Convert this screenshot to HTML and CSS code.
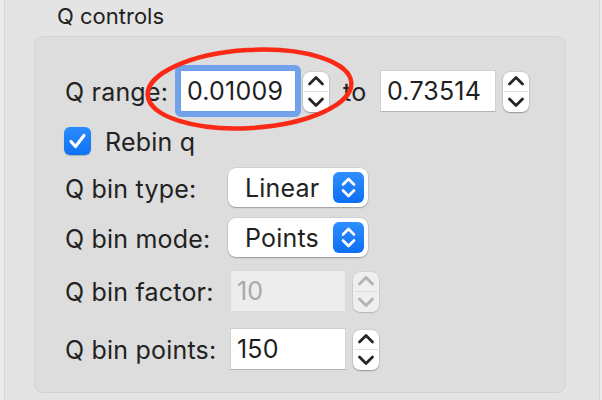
FILE: index.html
```html
<!DOCTYPE html>
<html>
<head>
<meta charset="utf-8">
<link rel="stylesheet" href="styles.css">
</head>
<body>
<div class="window">
  <div class="title">Q controls</div>
  <div class="group">
    <div class="row r-range">
      <span class="label label-range">Q range:</span>
      <div class="field focused"><span class="ring"></span>0.01009</div>
      <div class="stepper">
        <svg width="26" height="40" viewBox="0 0 26 40"><line class="div" x1="1" y1="19.5" x2="25" y2="19.5"/><polyline class="chev" points="6.5,12 13,5.5 19.5,12"/><polyline class="chev" points="6.5,27 13,33.5 19.5,27"/></svg>
      </div>
      <span class="label to">to</span>
      <div class="field">0.73514</div>
      <div class="stepper">
        <svg width="26" height="40" viewBox="0 0 26 40"><line class="div" x1="1" y1="19.5" x2="25" y2="19.5"/><polyline class="chev" points="6.5,12 13,5.5 19.5,12"/><polyline class="chev" points="6.5,27 13,33.5 19.5,27"/></svg>
      </div>
    </div>
    <div class="row r-check">
      <span class="checkbox"><svg width="27" height="28" viewBox="0 0 27 28"><path d="M7 14.5 L11.5 19.5 L20 8.5" fill="none" stroke="#fff" stroke-width="3.2" stroke-linecap="round" stroke-linejoin="round"/></svg></span>
      <span class="label check-label">Rebin q</span>
    </div>
    <div class="row r-type">
      <span class="label label-bin">Q bin type:</span>
      <div class="popup"><span class="popup-text">Linear</span><span class="popbtn"><svg width="31" height="31" viewBox="0 0 31 31"><polyline points="10,12.5 15.5,7 21,12.5"/><polyline points="10,18.5 15.5,24 21,18.5"/></svg></span></div>
    </div>
    <div class="row r-mode">
      <span class="label label-bin">Q bin mode:</span>
      <div class="popup"><span class="popup-text">Points</span><span class="popbtn"><svg width="31" height="31" viewBox="0 0 31 31"><polyline points="10,12.5 15.5,7 21,12.5"/><polyline points="10,18.5 15.5,24 21,18.5"/></svg></span></div>
    </div>
    <div class="row r-factor">
      <span class="label label-bin">Q bin factor:</span>
      <div class="field disabled">10</div>
      <div class="stepper stepper-disabled">
        <svg width="26" height="40" viewBox="0 0 26 40"><line class="div" x1="1" y1="19.5" x2="25" y2="19.5"/><polyline class="chev" points="6.5,12 13,5.5 19.5,12"/><polyline class="chev" points="6.5,27 13,33.5 19.5,27"/></svg>
      </div>
    </div>
    <div class="row r-points">
      <span class="label label-bin">Q bin points:</span>
      <div class="field">150</div>
      <div class="stepper">
        <svg width="26" height="40" viewBox="0 0 26 40"><line class="div" x1="1" y1="19.5" x2="25" y2="19.5"/><polyline class="chev" points="6.5,12 13,5.5 19.5,12"/><polyline class="chev" points="6.5,27 13,33.5 19.5,27"/></svg>
      </div>
    </div>
  </div>
</div>
<svg class="annotation" width="602" height="400" viewBox="0 0 602 400">
  <ellipse cx="249.5" cy="89" rx="102" ry="39" transform="rotate(-3.5 249.5 89)" fill="none" stroke="#fb2a17" stroke-width="4.5"/>
</svg>
</body>
</html>
```
FILE: styles.css
```css
html, body {
  margin: 0;
  padding: 0;
}
body {
  background: #e9eae9;
  font-family: Inter, "Noto Sans", sans-serif;
  color: #222;
  width: 602px;
  height: 400px;
  overflow: hidden;
  position: relative;
}
.window {
  margin-left: 4px;
  width: 596px;
  height: 400px;
  box-sizing: border-box;
  border-left: 1px solid #d6d7d6;
  border-right: 1px solid #d6d7d6;
  background: #e3e4e3;
  padding-left: 29px;
  padding-top: 5px;
}
.title {
  margin-left: 23px;
  font-size: 22px;
  line-height: 22px;
}
.group {
  margin-top: 9px;
  width: 532px;
  height: 357px;
  box-sizing: border-box;
  border: 1px solid #d2d3d2;
  border-radius: 9px;
  background: #dcdddc;
  padding: 33px 0 0 30px;
}
.row {
  display: flex;
  align-items: center;
}
.label {
  font-size: 25px;
  line-height: 30px;
  padding-top: 2px;
  white-space: nowrap;
  letter-spacing: 0.2px;
}
.label-range { width: 115px; }
.label-bin { width: 165px; }
.to {
  margin-left: 14px;
  width: 37px;
}
.r-range { height: 42px; }
.r-check { margin-top: 15px; height: 28px; }
.r-type { margin-top: 13px; height: 39px; }
.r-mode { margin-top: 11px; height: 39px; }
.r-factor { margin-top: 13px; height: 42px; }
.r-points { margin-top: 16px; height: 42px; }

.field {
  position: relative;
  width: 116px;
  height: 42px;
  box-sizing: border-box;
  background: #fff;
  border: 1px solid #d2d2d2;
  border-bottom-color: #b4b4b4;
  padding-left: 6px;
  font-size: 25px;
  line-height: 40px;
  color: #1f1f1f;
  letter-spacing: 0.2px;
}
.field.focused {
  border-color: #6a9de6;
}
.ring {
  position: absolute;
  left: -6px;
  top: -6px;
  right: -6px;
  bottom: -6px;
  border: 5px solid #72a3ea;
  border-radius: 6px;
  pointer-events: none;
}
.field.disabled {
  background: #ecedec;
  border-color: #dadada;
  color: #a9a9a9;
}
.stepper {
  align-self: flex-end;
  margin-left: 7px;
  width: 26px;
  height: 40px;
  border-radius: 7px;
  background: #fff;
  box-shadow: 0 0 0 0.5px rgba(0,0,0,0.12), 0 1px 1.5px rgba(0,0,0,0.28);
}
.stepper svg { display: block; }
.stepper .div {
  stroke: #e0e0e0;
  stroke-width: 1;
}
.stepper .chev {
  fill: none;
  stroke: #262626;
  stroke-width: 2.8;
  stroke-linecap: round;
  stroke-linejoin: round;
}
.stepper-disabled {
  background: #efefef;
  box-shadow: 0 0 0 0.5px rgba(0,0,0,0.08), 0 1px 1.5px rgba(0,0,0,0.14);
}
.stepper-disabled .chev { stroke: #b3b3b3; }
.stepper-disabled .div { stroke: #dedede; }

.checkbox {
  margin-left: -1px;
  width: 27px;
  height: 28px;
  border-radius: 6px;
  background: linear-gradient(#2a8bff, #0f72f2);
  box-shadow: 0 0.5px 1px rgba(0,0,0,0.2);
}
.checkbox svg { display: block; }
.check-label { margin-left: 14px; }

.popup {
  margin-left: -2px;
  height: 39px;
  display: flex;
  align-items: center;
  border-radius: 8px;
  background: #fff;
  box-shadow: 0 0 0 0.5px rgba(0,0,0,0.12), 0 1px 1.5px rgba(0,0,0,0.25);
  padding-left: 17px;
  padding-right: 4px;
}
.popup-text {
  font-size: 25px;
  line-height: 30px;
  padding-top: 1px;
  margin-right: 14px;
  letter-spacing: 0.2px;
}
.popbtn {
  width: 31px;
  height: 31px;
  border-radius: 6px;
  background: linear-gradient(#2f8fff, #0c6ff3);
}
.popbtn svg { display: block; }
.popbtn polyline {
  fill: none;
  stroke: #fff;
  stroke-width: 2.6;
  stroke-linecap: round;
  stroke-linejoin: round;
}
.annotation {
  position: absolute;
  left: 0;
  top: 0;
  pointer-events: none;
}
```
